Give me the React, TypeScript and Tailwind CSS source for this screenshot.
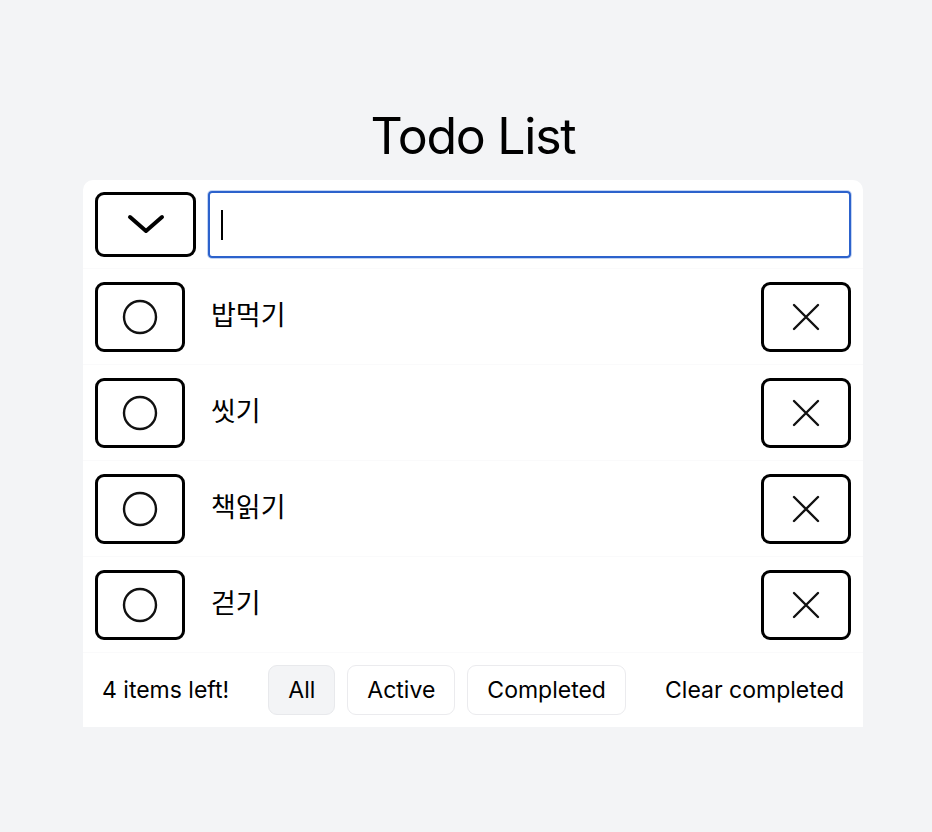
import { useState } from "react";

type Todo = { id: number; text: string; done: boolean };

const INITIAL: Todo[] = [
  { id: 1, text: "밥먹기", done: false },
  { id: 2, text: "씻기", done: false },
  { id: 3, text: "책읽기", done: false },
  { id: 4, text: "걷기", done: false },
];

const FILTERS = ["All", "Active", "Completed"] as const;

function ChevronDown() {
  return (
    <svg width="40" height="22" viewBox="0 0 40 22" fill="none">
      <path d="M4 4 L20 18 L36 4" stroke="#000" strokeWidth="4" strokeLinecap="round" strokeLinejoin="round" />
    </svg>
  );
}

function CircleIcon() {
  return (
    <svg width="36" height="36" viewBox="0 0 36 36" fill="none">
      <circle cx="18" cy="18" r="16" stroke="#111" strokeWidth="2.4" />
    </svg>
  );
}

function XIcon() {
  return (
    <svg width="28" height="28" viewBox="0 0 28 28" fill="none">
      <path d="M2 2 L26 26 M26 2 L2 26" stroke="#111" strokeWidth="2.4" strokeLinecap="round" />
    </svg>
  );
}

export default function App() {
  const [todos, setTodos] = useState<Todo[]>(INITIAL);
  const [text, setText] = useState("");
  const [filter, setFilter] = useState<typeof FILTERS[number]>("All");

  const left = todos.filter((t) => !t.done).length;
  const visible = todos.filter((t) =>
    filter === "All" ? true : filter === "Active" ? !t.done : t.done
  );

  function addTodo(e: React.FormEvent) {
    e.preventDefault();
    if (!text.trim()) return;
    setTodos([...todos, { id: Date.now(), text: text.trim(), done: false }]);
    setText("");
  }

  return (
    <div className="min-h-[832px] bg-[#f3f4f6] pt-[104px] pl-[14px] font-['Inter','Noto_Sans_CJK_KR',sans-serif] text-black">
      <h1 className="text-center text-[50px] leading-[64px] tracking-[-0.025em] font-normal mb-[12px]">
        Todo List
      </h1>

      <div className="mx-auto w-[780px] bg-white rounded-t-[10px]">
        {/* Input row */}
        <form onSubmit={addTodo} className="flex items-center gap-3 px-3 h-[89px] border-b border-[#fafafb]">
          <button
            type="button"
            onClick={() => setTodos(todos.map((t) => ({ ...t, done: left > 0 })))}
            className="w-[101px] h-[65px] border-[3px] border-black rounded-[9px] flex items-center justify-center"
          >
            <ChevronDown />
          </button>
          <div className="flex-1 relative">
            <input
              autoFocus
              value={text}
              onChange={(e) => setText(e.target.value)}
              className="w-full h-[67px] border-2 border-[#2c62cc] rounded-[4px] px-3 text-[24px] outline-none shadow-[0_0_0_1px_#c3d4f3] caret-black"
            />
            {text === "" && (
              <span className="absolute left-[13px] top-[19px] w-[2px] h-[30px] bg-black pointer-events-none" />
            )}
          </div>
        </form>

        {/* Items */}
        {visible.map((todo) => (
          <div key={todo.id} className="flex items-center px-3 h-[96px] border-b border-[#fafafb]">
            <button
              onClick={() => setTodos(todos.map((t) => (t.id === todo.id ? { ...t, done: !t.done } : t)))}
              className="w-[90px] h-[70px] border-[3px] border-black rounded-[9px] flex items-center justify-center"
            >
              <CircleIcon />
            </button>
            <span className={`ml-[26px] flex-1 text-[27px] leading-none -mt-[3px] ${todo.done ? "line-through text-gray-400" : ""}`}>
              {todo.text}
            </span>
            <button
              onClick={() => setTodos(todos.filter((t) => t.id !== todo.id))}
              className="w-[90px] h-[70px] border-[3px] border-black rounded-[9px] flex items-center justify-center"
            >
              <XIcon />
            </button>
          </div>
        ))}

        {/* Footer */}
        <div className="flex items-center justify-between px-[19px] h-[74px]">
          <span className="text-[23px]">{left} items left!</span>
          <div className="flex gap-3">
            {FILTERS.map((f) => (
              <button
                key={f}
                onClick={() => setFilter(f)}
                className={`h-[50px] px-[19px] rounded-[9px] border text-[23px] ${
                  filter === f ? "bg-[#f3f4f6] border-[#e8e9ec]" : "bg-white border-[#ebebee]"
                }`}
              >
                {f}
              </button>
            ))}
          </div>
          <button
            onClick={() => setTodos(todos.filter((t) => !t.done))}
            className="text-[23px]"
          >
            Clear completed
          </button>
        </div>
      </div>
    </div>
  );
}
